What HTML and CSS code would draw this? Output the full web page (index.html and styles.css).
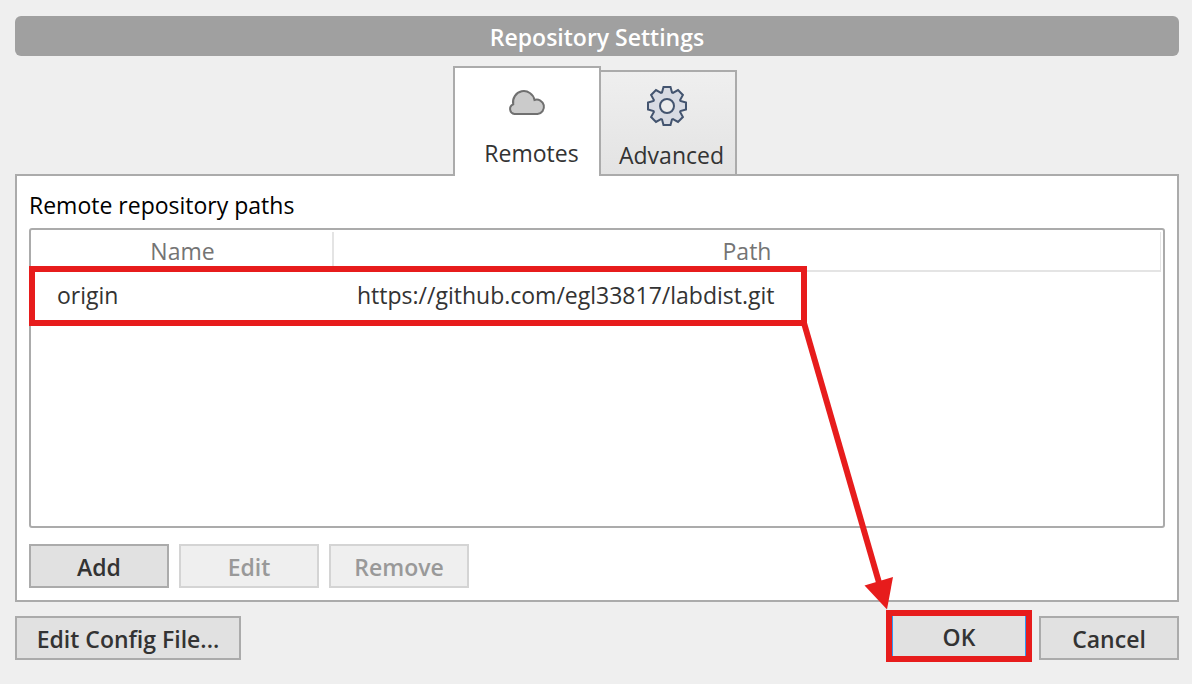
FILE: index.html
```html
<!DOCTYPE html>
<html lang="en">
<head>
<meta charset="utf-8">
<meta name="viewport" content="width=device-width, initial-scale=1">
<title>Repository Settings</title>
<link rel="stylesheet" href="styles.css">
</head>
<body>
<main class="dialog">
  <h1 class="title">Repository Settings</h1>
  <div class="tabs" role="tablist">
    <button class="tab tab-active" type="button" role="tab" aria-selected="true" aria-controls="remotes">
      <svg class="tab-icon" viewBox="-1 -6 40 40" aria-hidden="true">
        <path d="M6.5 24A5 5 0 0 1 5.2 14.4A10.8 11 0 0 1 26.500 10A7.200 7.200 0 1 1 29.500 24Z" fill="#cbcbcb" stroke="#707070" stroke-width="2"/>
      </svg>
      <span class="tab-label">Remotes</span>
    </button>
    <button class="tab tab-idle" type="button" role="tab" aria-selected="false">
      <svg class="tab-icon" viewBox="-20 -20 40 40" aria-hidden="true">
        <path d="M-5-13.5L-3.5-19H3.5L5-13.5L6-13.1L11-15.9L15.9-11L13.1-6L13.5-5L19-3.5V3.5L13.5 5L13.1 6L15.9 11L11 15.9L6 13.1L5 13.5L3.5 19H-3.5L-5 13.5L-6 13.1L-11 15.9L-15.9 11L-13.1 6L-13.5 5L-19 3.5V-3.5L-13.5-5L-13.1-6L-15.9-11L-11-15.9L-6-13.1Z" fill="#d8dbe3" stroke="#43546f" stroke-width="2"/>
        <circle r="7" fill="#ededed" stroke="#43546f" stroke-width="2"/>
      </svg>
      <span class="tab-label">Advanced</span>
    </button>
  </div>
  <section class="panel" id="remotes" role="tabpanel">
    <h2 class="heading" id="paths-label">Remote repository paths</h2>
    <div class="list">
      <table class="remotes" aria-labelledby="paths-label">
        <colgroup><col class="col-name"><col></colgroup>
        <thead><tr><th scope="col">Name</th><th scope="col">Path</th></tr></thead>
        <tbody><tr><td>origin</td><td>https://github.com/egl33817/labdist.git</td></tr></tbody>
      </table>
      <div class="row-mark"></div>
    </div>
    <div class="actions">
      <button class="btn" type="button">Add</button>
      <button class="btn" type="button" disabled>Edit</button>
      <button class="btn" type="button" disabled>Remove</button>
    </div>
  </section>
  <footer class="footer">
    <button class="btn btn-wide" type="button">Edit Config File...</button>
    <div class="confirm">
      <div class="ok-wrap">
        <button class="btn btn-default" type="button">OK</button>
        <div class="ok-mark"></div>
      </div>
      <button class="btn" type="button">Cancel</button>
    </div>
  </footer>
  <svg class="arrow" viewBox="0 0 100 290" aria-hidden="true">
    <path d="M4 3L80 266" stroke="#e71c1c" stroke-width="6"/>
    <path d="M64.500 265.500L93 257L87 289.500Z" fill="#e71c1c"/>
  </svg>
</main>
</body>
</html>
```
FILE: styles.css
```css
* { box-sizing: border-box; }

body {
  margin: 0;
  background: #efefef;
  color: #333;
  font-family: "Open Sans", "Noto Sans", sans-serif;
  font-size: 23px;
  line-height: 32px;
}

button { font: inherit; color: inherit; }

.dialog {
  position: relative;
  display: flex;
  flex-direction: column;
  min-height: 100vh;
  padding: 16px 13px 24px 15px;
}

.title {
  margin: 0 0 10px;
  padding: 5px 0 3px;
  border-radius: 6px;
  background: #a0a0a0;
  color: #fff;
  font-size: 23px;
  font-weight: 600;
  text-align: center;
}

.tabs {
  position: relative;
  z-index: 1;
  display: flex;
  justify-content: center;
  align-items: flex-end;
  margin-bottom: -2px;
  padding-right: 4px;
}

.tab {
  display: flex;
  flex-direction: column;
  align-items: center;
  border: 2px solid #ababab;
}

.tab-active {
  width: 148px;
  height: 110px;
  padding: 16px 0 0;
  border-bottom: 0;
  background: #fff;
}

.tab-idle {
  width: 136px;
  height: 106px;
  padding: 14px 2px 0 0;
  border-left: 0;
  background: linear-gradient(#efefef, #e3e3e3);
}

.tab-icon { flex: none; width: 40px; height: 40px; }
.tab-label { margin-top: 13px; padding-left: 9px; }

.panel {
  display: flex;
  flex: 1;
  flex-direction: column;
  padding: 13px 12px 12px;
  border: 2px solid #ababab;
  background: #fff;
}

.heading {
  margin: 0 0 7px;
  color: #000;
  font-size: 23px;
  font-weight: 400;
}

.list {
  position: relative;
  flex: 1;
  padding: 2px;
  padding-left: 0;
  border: 2px solid #ababab;
  border-radius: 3px;
}

.remotes {
  width: 100%;
  table-layout: fixed;
  border-collapse: separate;
  border-spacing: 0;
}

.col-name { width: 303px; }

.remotes th {
  height: 40px;
  padding: 0 0 0 2px;
  border-right: 2px solid #e4e4e4;
  border-bottom: 2px solid #e4e4e4;
  color: #747474;
  font-weight: 400;
}

.remotes th:last-child { padding: 0; border-right-width: 1px; }

.remotes td {
  height: 48px;
  padding: 0 23px 2px;
  white-space: nowrap;
}

.remotes td:first-child { padding-left: 26px; }

.row-mark {
  position: absolute;
  top: 36px;
  left: -2px;
  width: 778px;
  height: 60px;
  border: 6px solid #e71c1c;
}

.actions { display: flex; gap: 10px; margin-top: 16px; }

.btn {
  width: 140px;
  height: 44px;
  padding: 1px 0 0;
  border: 2px solid #ababab;
  background: #e1e1e1;
  font-weight: 600;
  line-height: 32px;
}

.btn:disabled {
  border-color: #d4d4d4;
  background: #efefef;
  color: #999;
}

.btn-wide { width: 226px; }

.btn-default {
  padding: 0 0 2px;
  border: 0 solid #2f96f5;
  border-width: 0 4px;
}

.footer {
  display: flex;
  justify-content: space-between;
  margin-top: 14px;
}

.confirm { display: flex; gap: 10px; }
.ok-wrap { position: relative; }

.ok-mark {
  position: absolute;
  inset: -6px -3px -2px;
  border: 6px solid #e71c1c;
}

.arrow {
  position: absolute;
  z-index: 2;
  top: 320px;
  left: 800px;
  width: 100px;
  height: 290px;
  pointer-events: none;
}
```
